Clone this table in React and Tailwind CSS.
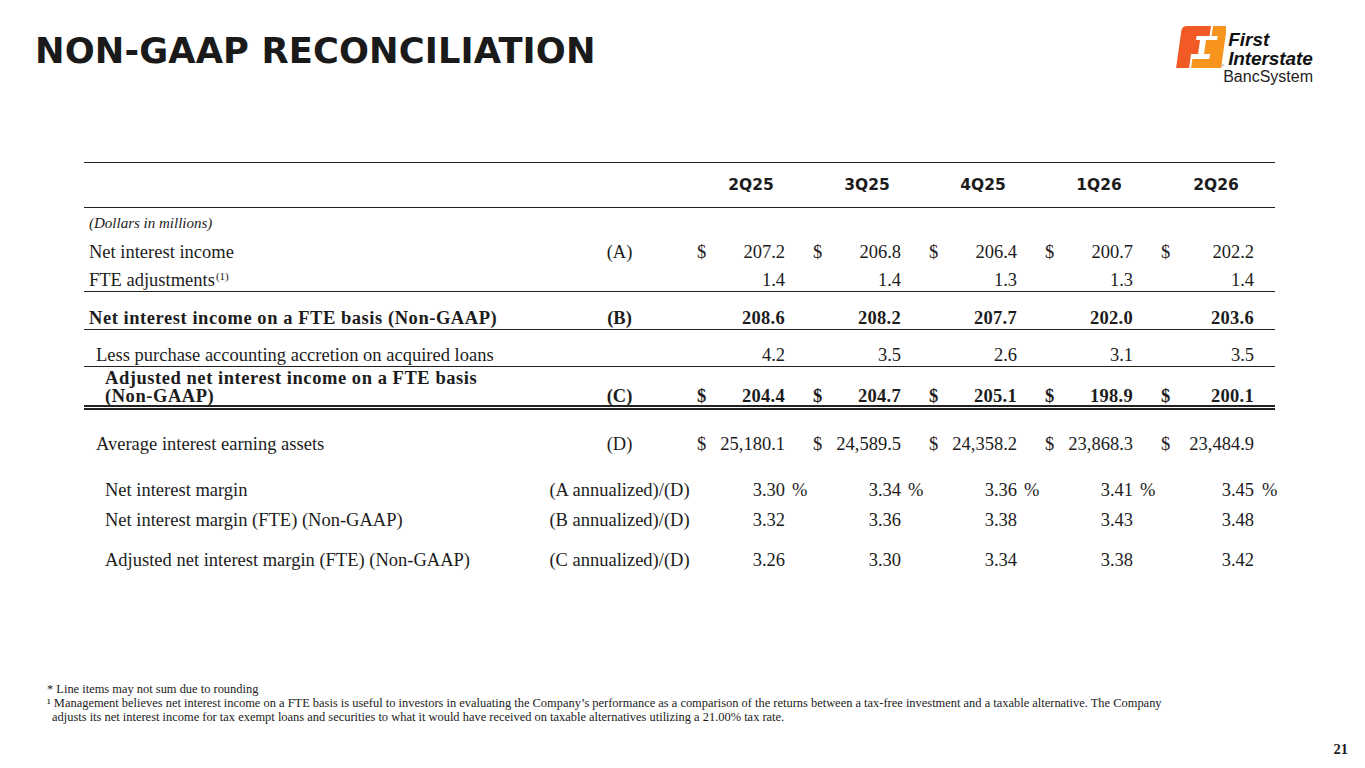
/**
 * Non-GAAP reconciliation slide
 */

const serif = { fontFamily: '"Liberation Serif", "Times New Roman", serif' };

const QUARTERS = ['2Q25', '3Q25', '4Q25', '1Q26', '2Q26'];

// per-column layout: last column is 2px wider, value sits a bit further right
const COLS = [
  { cell: 'w-[116px]', pct: 'w-[24px] pl-[7px]' },
  { cell: 'w-[116px]', pct: 'w-[24px] pl-[7px]' },
  { cell: 'w-[116px]', pct: 'w-[24px] pl-[7px]' },
  { cell: 'w-[116px]', pct: 'w-[24px] pl-[7px]' },
  { cell: 'w-[118px]', pct: 'w-[21px] pl-[8px]' },
];

const Logo = () => (
  <div className="flex items-start">
    <svg width="50" height="44" viewBox="0 0 50 44">
      <g transform="translate(6 1) skewX(-8)">
        <path
          d="M5 0 H29 V10 H16 V14 H20 V28 H13 V42 H0 V5 Q0 0 5 0 Z"
          fill="#f15a24"
        />
        <path
          d="M31 0 H45 V42 H15 V33 H32 V28 H26 V14 H37 V10 H31 Z"
          fill="#f7941d"
        />
      </g>
      <text x="45" y="42" fontSize="4" fill="#555" fontFamily="Liberation Sans, sans-serif">®</text>
    </svg>
    <div className="mt-[6px] flex flex-col text-[#111]" style={{ fontFamily: '"Liberation Sans", Arial, sans-serif' }}>
      <span className="pl-[2px] text-[19px] leading-[18.5px] font-bold italic tracking-[0px]">First</span>
      <span className="pl-[2px] text-[19px] leading-[18.5px] font-bold italic tracking-[-0.1px]">Interstate</span>
      <span className="-ml-[3px] text-[16px] leading-[18px] text-[#222]">BancSystem</span>
    </div>
  </div>
);

const Values = ({ values, dollar, pct, bold }) =>
  values.map((v, i) => (
    <div key={i} className={`${COLS[i].cell} flex items-center`}>
      <span className="w-[14px] pl-[4px]">{dollar ? '$' : ''}</span>
      <span className={`flex-1 text-right ${bold ? 'tracking-[0.3px]' : ''}`}>{v}</span>
      <span className={`${COLS[i].pct}`}>{pct ? '%' : ''}</span>
    </div>
  ));

const Row = ({ label, refText, values, dollar, pct, bold, className, labelClass, align = 'items-center' }) => (
  <div className={`flex ${align} ${bold ? 'font-bold' : ''} ${className}`}>
    <div className={`w-[462px] ${labelClass || 'pl-[5px]'} ${bold ? 'tracking-[0.55px]' : ''}`}>{label}</div>
    <div className="w-[147px] text-center whitespace-nowrap">{refText}</div>
    {values && <Values values={values} dollar={dollar} pct={pct} bold={bold} />}
  </div>
);

export default function App() {
  return (
    <div className="w-[1365px] h-[768px] bg-white text-[#1c1c1c] flex flex-col overflow-hidden" style={serif}>
      {/* header */}
      <div className="flex justify-between items-start h-[136px]">
        <h1
          className="pl-[35px] pt-[33px] text-[35.3px] leading-[35px] font-bold text-[#1a1a1a] tracking-[0.1px]"
          style={{ fontFamily: '"DejaVu Sans", Verdana, sans-serif' }}
        >
          NON-GAAP RECONCILIATION
        </h1>
        <div className="pt-[25px] pr-[52px]">
          <Logo />
        </div>
      </div>

      {/* table */}
      <div className="ml-[84px] mt-[26px] w-[1191px] text-[18.5px] leading-[22px]">
        <div className="flex items-center h-[46px] border-t-[1.5px] border-b-[1.5px] border-[#222]" style={{ fontFamily: '"DejaVu Sans", Verdana, sans-serif' }}>
          <div className="w-[609px]" />
          {QUARTERS.map((q, i) => (
            <div key={q} className={`${COLS[i].cell} text-center text-[15.5px] font-bold`}>{q}</div>
          ))}
        </div>

        <Row className="h-[28px]" label={<span className="italic text-[15px]">(Dollars in millions)</span>} />
        <Row
          className="h-[32px]"
          label="Net interest income"
          refText="(A)"
          dollar
          values={['207.2', '206.8', '206.4', '200.7', '202.2']}
        />
        <Row
          className="h-[24px] border-b-[1.5px] border-[#222]"
          label={<>FTE adjustments<sup className="text-[11px] ml-[1px]">(1)</sup></>}
          values={['1.4', '1.4', '1.3', '1.3', '1.4']}
        />
        <Row
          bold
          className="h-[38px] pt-[14px] border-b-[1.5px] border-[#222]"
          label="Net interest income on a FTE basis (Non-GAAP)"
          refText="(B)"
          values={['208.6', '208.2', '207.7', '202.0', '203.6']}
        />
        <Row
          className="h-[37px] pt-[13px] border-b-[1.5px] border-[#222]"
          labelClass="pl-[12px]"
          label="Less purchase accounting accretion on acquired loans"
          values={['4.2', '3.5', '2.6', '3.1', '3.5']}
        />
        <Row
          bold
          align="items-end"
          className="pt-[2px] leading-[18px] border-b-[5px] border-double border-[#222]"
          labelClass="pl-[21px]"
          label={<>Adjusted net interest income on a FTE basis<br />(Non-GAAP)</>}
          refText="(C)"
          dollar
          values={['204.4', '204.7', '205.1', '198.9', '200.1']}
        />
        <Row
          className="h-[68px]"
          labelClass="pl-[12px]"
          label="Average interest earning assets"
          refText="(D)"
          dollar
          values={['25,180.1', '24,589.5', '24,358.2', '23,868.3', '23,484.9']}
        />
        <Row
          className="h-[24px]"
          labelClass="pl-[21px]"
          label="Net interest margin"
          refText="(A annualized)/(D)"
          pct
          values={['3.30', '3.34', '3.36', '3.41', '3.45']}
        />
        <Row
          className="h-[36px]"
          labelClass="pl-[21px]"
          label="Net interest margin (FTE) (Non-GAAP)"
          refText="(B annualized)/(D)"
          values={['3.32', '3.36', '3.38', '3.43', '3.48']}
        />
        <Row
          className="h-[44px]"
          labelClass="pl-[21px]"
          label="Adjusted net interest margin (FTE) (Non-GAAP)"
          refText="(C annualized)/(D)"
          values={['3.26', '3.30', '3.34', '3.38', '3.42']}
        />
      </div>

      {/* footnotes */}
      <div className="ml-[47px] mt-[100px] text-[12.45px] leading-[14px] text-[#222] whitespace-nowrap">
        <div>* Line items may not sum due to rounding</div>
        <div>
          ¹ Management believes net interest income on a FTE basis is useful to investors in evaluating the Company’s performance as a comparison of the returns between a tax-free investment and a taxable alternative. The Company
        </div>
        <div className="pl-[5px]">
          adjusts its net interest income for tax exempt loans and securities to what it would have received on taxable alternatives utilizing a 21.00% tax rate.
        </div>
      </div>

      <div className="flex justify-end pr-[17px] mt-[17px]">
        <span className="text-[14.5px] leading-[16px] font-bold">21</span>
      </div>
    </div>
  );
}
